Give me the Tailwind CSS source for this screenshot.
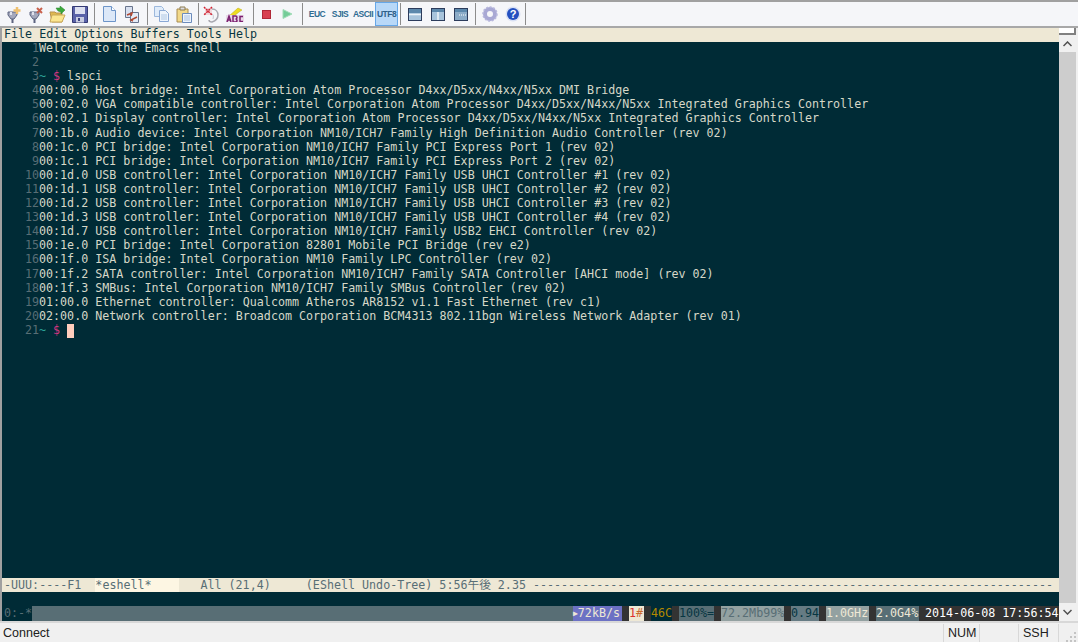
<!doctype html>
<html>

<head>
  <meta charset="UTF-8">
  <script src="https://cdn.jsdelivr.net/npm/@tailwindcss/browser@4"></script>
</head>

<body class="w-[1078px] h-[642px] overflow-hidden flex flex-col bg-[#f0f0f0] font-['DejaVu_Sans_Mono','Noto_Sans_CJK_JP',monospace] text-[11.68px]">

  <!-- toolbar -->
  <div class="h-[28px] shrink-0 flex items-center border-t-2 border-b-2 border-t-[#a0a0a0] border-b-[#a8a8a8] bg-[#f5f6f9]">
    <div class="w-[2px]"></div>
    <div class="w-[22px] flex justify-center"><svg width="17" height="17" viewBox="0 0 17 17"><path d="M3 6h9v3l-3 4H6L3 9z" fill="#a4a8bc" stroke="#5c6480"/><path d="M5 6h2v3H5z" fill="#e0e2ec"/><path d="M7.500 13v4" stroke="#5c6480" stroke-width="2"/><path d="M12 1v7M8.500 4.500h7" stroke="#eec070" stroke-width="2.500"/></svg></div>
    <div class="w-[22px] flex justify-center"><svg width="17" height="17" viewBox="0 0 17 17"><path d="M3 6h9v3l-3 4H6L3 9z" fill="#a4a8bc" stroke="#5c6480"/><path d="M5 6h2v3H5z" fill="#e0e2ec"/><path d="M7.500 13v4" stroke="#5c6480" stroke-width="2"/><path d="M10 2l5 5M15 2l-5 5" stroke="#c8604c" stroke-width="2"/></svg></div>
    <div class="w-[22px] flex justify-center"><svg width="17" height="17" viewBox="0 0 17 17"><path d="M1 6h5l1 1h6v9H3z" fill="#e0b850" stroke="#b8944c"/><path d="M3 9h13l-3 7H1z" fill="#fbe690" stroke="#c8a858"/><path d="M7 2l4 0 0-2 5 4-4 4v-2l-3-1z" fill="#3aa83a" stroke="#2a8030" stroke-width=".5"/></svg></div>
    <div class="w-[23px] flex justify-center"><svg width="16" height="17" viewBox="0 0 16 17"><path d="M.5 .5h15v16H.5z" fill="#5a62a8" stroke="#343a74"/><path d="M3 1h10v7H3z" fill="#dde0f0"/><path d="M4 11h8v5.500H4z" fill="#c8cce0"/><path d="M6 12h2v3H6z" fill="#3a4280"/></svg></div>
    <div class="w-[1px] h-[22px] mx-[3px] bg-[#8c8c8c]"></div>
    <div class="w-[22px] flex justify-center"><svg width="13" height="16" viewBox="0 0 13 16"><path d="M.5 .5h8l4 4v11H.5z" fill="#dce8f8" stroke="#6c94c8"/><path d="M8.500 .5v4h4" fill="#fff" stroke="#6c94c8"/></svg></div>
    <div class="w-[24px] flex justify-center"><svg width="16" height="17" viewBox="0 0 16 17"><path d="M1.500 .5h7v11h-7z" fill="#d8e0f0" stroke="#68748c"/><path d="M6.500 6.500h8v10h-8z" fill="#e4ecf8" stroke="#68748c"/><path d="M3 9l5-2-1 3M13 11l-6 3 2 1" stroke="#b04830" stroke-width="1.500" fill="none"/></svg></div>
    <div class="w-[1px] h-[22px] mx-[3px] bg-[#8c8c8c]"></div>
    <div class="w-[21px] flex justify-center"><svg width="15" height="16" viewBox="0 0 15 16"><path d="M.5 .5h7l2 2v8h-9z" fill="#e0ecfa" stroke="#9cb8dc"/><path d="M5.500 4.500h6l3 3v8h-9z" fill="#eef4fc" stroke="#8aa8d4"/><path d="M7 9h6M7 11h6M7 13h6" stroke="#b0c8e4"/></svg></div>
    <div class="w-[23px] flex justify-center"><svg width="16" height="17" viewBox="0 0 16 17"><path d="M1 3h11v13H1z" fill="#f2d98a" stroke="#a88c50" rx="1"/><path d="M4 1h5v3H4z" fill="#dcdce4" stroke="#8c7c50"/><path d="M6.500 7.500h9v9h-9z" fill="#eef4fc" stroke="#6c8cbc"/><path d="M8 10h6M8 12h6M8 14h6" stroke="#a8c0e0"/></svg></div>
    <div class="w-[1px] h-[22px] mx-[3px] bg-[#8c8c8c]"></div>
    <div class="w-[18px] flex justify-center"><svg width="16" height="17" viewBox="0 0 16 17"><path d="M9 3c4 0 6 3 6 6 0 4-3 6-6 7-2 0-3-1-3-2" fill="none" stroke="#a8a8b0" stroke-width="1.500"/><path d="M8 7c2 1 3 3 2 6" fill="none" stroke="#c8c8d0"/><rect x="2" y="2" width="7" height="7" fill="#f0d8dc"/><path d="M1 1l8 8M9 1l-8 8" stroke="#d02030" stroke-width="1.500" stroke-dasharray="2 1"/></svg></div>
    <div class="w-[30px] flex justify-center"><svg width="18" height="15" viewBox="0 0 18 15"><path d="M3 9L12 1l4 2-3 2-5 4z" fill="#eedc20" stroke="#b8a818" stroke-width=".5"/><rect x="0" y="8" width="18" height="7" fill="#e8d8e8"/><path d="M1 15l2-6 2 6M2 13h2M7 9v6h2.500c2 0 2-3 0-3 2 0 2-3 0-3zM17 9.500h-3v5h3" fill="none" stroke="#7c2070" stroke-width="1.500"/></svg></div>
    <div class="w-[1px] h-[22px] mx-[3px] bg-[#8c8c8c]"></div>
    <div class="w-[18px] flex justify-center"><div class="w-[9px] h-[9px] bg-[#d84050] border border-[#b02838]"></div></div>
    <div class="w-[24px] flex justify-center"><svg width="11" height="10" viewBox="0 0 11 10"><path d="M1 .5l9 4.500-9 4.500z" fill="#74cc98" stroke="#a0dcb8"/></svg></div>
    <div class="w-[1px] h-[22px] mx-[3px] bg-[#8c8c8c]"></div>
    <div class="w-[22px] text-center font-['Liberation_Sans'] font-bold text-[8.500px] tracking-[-.5px] text-[#2f6c92]">EUC</div>
    <div class="w-[24px] text-center font-['Liberation_Sans'] font-bold text-[8.500px] tracking-[-.5px] text-[#2f6c92]">SJIS</div>
    <div class="w-[22px] text-center font-['Liberation_Sans'] font-bold text-[8.500px] tracking-[-.5px] text-[#2f6c92]">ASCII</div>
    <div class="w-[23px] h-[24px] ml-[1px] flex items-center justify-center border border-[#66a7e8] bg-[#b8d8f8] font-['Liberation_Sans'] font-bold text-[8.500px] tracking-[-.5px] text-[#2f6088]">UTF8</div>
    <div class="w-[1px] h-[22px] ml-[2px] mr-[3px] bg-[#8c8c8c]"></div>
    <div class="w-[22px] flex justify-center"><svg width="14" height="13" viewBox="0 0 14 13"><rect x=".5" y=".5" width="13" height="12" fill="#a8c4dc" stroke="#2c3c5c"/><path d="M1 1h12v4H1z" fill="#5c88ac"/><path d="M1 6.500h12" stroke="#eef4fa" stroke-width="1.500"/></svg></div>
    <div class="w-[23px] flex justify-center"><svg width="14" height="13" viewBox="0 0 14 13"><rect x=".5" y=".5" width="13" height="12" fill="#a8c4dc" stroke="#2c3c5c"/><path d="M1 1h12v3H1z" fill="#5c88ac"/><path d="M7 4v8" stroke="#eef4fa" stroke-width="1.500"/></svg></div>
    <div class="w-[23px] flex justify-center"><svg width="14" height="13" viewBox="0 0 14 13"><rect x=".5" y=".5" width="13" height="12" fill="#8cacc8" stroke="#2c3c5c"/><path d="M1 1h12v3H1z" fill="#5c88ac"/><path d="M5 7h1M7 7h1M9 7h1M11 7h1" stroke="#fff"/></svg></div>
    <div class="w-[1px] h-[22px] mx-[3px] bg-[#8c8c8c]"></div>
    <div class="w-[22px] flex justify-center"><svg width="16" height="16" viewBox="0 0 16 16"><circle cx="8" cy="8" r="5" fill="none" stroke="#a8a8d4" stroke-width="4"/><circle cx="8" cy="8" r="7" fill="none" stroke="#b8b8dc" stroke-width="1.500" stroke-dasharray="2 1.600"/></svg></div>
    <div class="w-[24px] flex justify-center"><svg width="16" height="16" viewBox="0 0 16 16"><circle cx="8" cy="8" r="7.500" fill="#d8e0f4"/><circle cx="8" cy="8" r="6" fill="#2450c0"/><text x="8" y="12" text-anchor="middle" font-family="Liberation Sans" font-weight="700" font-size="11" fill="#fff">?</text></svg></div>
    <div class="w-[1px] h-[22px] bg-[#8c8c8c]"></div>
  </div>

  <!-- emacs frame -->
  <div class="h-[593px] shrink-0 flex border-l-2 border-[#a0a0a0]">
    <div class="w-[1057px] flex flex-col">
      <!-- menu bar -->
      <div class="h-[14px] pl-[2px] flex items-center bg-[#eee8d5] text-[#073642] whitespace-pre">File Edit Options Buffers Tools Help</div>

      <!-- buffer -->
      <div class="flex-1 bg-[#002b36] text-[#d6d8c8] whitespace-pre grid grid-cols-[37px_1fr] auto-rows-[14.1px] content-start leading-[13.1px]">
        <span class="text-right text-[#586e75]">1</span><span>Welcome to the Emacs shell</span>
        <span class="text-right text-[#586e75]">2</span><span></span>
        <span class="text-right text-[#586e75]">3</span><span><span class="text-[#2aa198]">~</span> <span class="text-[#d33682]">$</span> lspci</span>
        <span class="text-right text-[#586e75]">4</span><span>00:00.0 Host bridge: Intel Corporation Atom Processor D4xx/D5xx/N4xx/N5xx DMI Bridge</span>
        <span class="text-right text-[#586e75]">5</span><span>00:02.0 VGA compatible controller: Intel Corporation Atom Processor D4xx/D5xx/N4xx/N5xx Integrated Graphics Controller</span>
        <span class="text-right text-[#586e75]">6</span><span>00:02.1 Display controller: Intel Corporation Atom Processor D4xx/D5xx/N4xx/N5xx Integrated Graphics Controller</span>
        <span class="text-right text-[#586e75]">7</span><span>00:1b.0 Audio device: Intel Corporation NM10/ICH7 Family High Definition Audio Controller (rev 02)</span>
        <span class="text-right text-[#586e75]">8</span><span>00:1c.0 PCI bridge: Intel Corporation NM10/ICH7 Family PCI Express Port 1 (rev 02)</span>
        <span class="text-right text-[#586e75]">9</span><span>00:1c.1 PCI bridge: Intel Corporation NM10/ICH7 Family PCI Express Port 2 (rev 02)</span>
        <span class="text-right text-[#586e75]">10</span><span>00:1d.0 USB controller: Intel Corporation NM10/ICH7 Family USB UHCI Controller #1 (rev 02)</span>
        <span class="text-right text-[#586e75]">11</span><span>00:1d.1 USB controller: Intel Corporation NM10/ICH7 Family USB UHCI Controller #2 (rev 02)</span>
        <span class="text-right text-[#586e75]">12</span><span>00:1d.2 USB controller: Intel Corporation NM10/ICH7 Family USB UHCI Controller #3 (rev 02)</span>
        <span class="text-right text-[#586e75]">13</span><span>00:1d.3 USB controller: Intel Corporation NM10/ICH7 Family USB UHCI Controller #4 (rev 02)</span>
        <span class="text-right text-[#586e75]">14</span><span>00:1d.7 USB controller: Intel Corporation NM10/ICH7 Family USB2 EHCI Controller (rev 02)</span>
        <span class="text-right text-[#586e75]">15</span><span>00:1e.0 PCI bridge: Intel Corporation 82801 Mobile PCI Bridge (rev e2)</span>
        <span class="text-right text-[#586e75]">16</span><span>00:1f.0 ISA bridge: Intel Corporation NM10 Family LPC Controller (rev 02)</span>
        <span class="text-right text-[#586e75]">17</span><span>00:1f.2 SATA controller: Intel Corporation NM10/ICH7 Family SATA Controller [AHCI mode] (rev 02)</span>
        <span class="text-right text-[#586e75]">18</span><span>00:1f.3 SMBus: Intel Corporation NM10/ICH7 Family SMBus Controller (rev 02)</span>
        <span class="text-right text-[#586e75]">19</span><span>01:00.0 Ethernet controller: Qualcomm Atheros AR8152 v1.1 Fast Ethernet (rev c1)</span>
        <span class="text-right text-[#586e75]">20</span><span>02:00.0 Network controller: Broadcom Corporation BCM4313 802.11bgn Wireless Network Adapter (rev 01)</span>
        <span class="text-right text-[#586e75]">21</span><span><span class="text-[#2aa198]">~</span> <span class="text-[#d33682]">$</span> <span class="inline-block w-[7px] h-[14px] align-top bg-[#ffcdbd]"></span></span>
      </div>

      <!-- mode line -->
      <div class="h-[14px] bg-[#eee8d5] text-[#586e75] whitespace-pre leading-[14px] pl-[2px] flex"><span class="shrink-0">-UUU:----F1  </span><span class="w-[84px] shrink-0 bg-[#fdf6e3]">*eshell*</span><span class="shrink-0">   All (21,4)     (EShell Undo-Tree) 5:56午後 2.35 --------------------------------------------------------------------------</span></div>
      <div class="h-[14px] bg-[#002b36]"></div>

      <!-- status line -->
      <div class="h-[15px] flex bg-[#586e75] whitespace-pre leading-[15px]">
        <span class="w-[30px] pl-[2px] bg-[#002b36] text-[#586e75]">0:-*</span>
        <span class="flex-1"></span>
        <span class="w-[49px] bg-[#6c71c4] text-[#eee8d5]"><span class="text-[8px] align-[1px]">▶</span>72kB/s</span>
        <span class="w-[7px] bg-[#333333]"></span>
        <span class="w-[15px] bg-[#eee8d5] text-[#dc322f]">1<span class="text-[#cb6b2f]">#</span></span>
        <span class="w-[7px] bg-[#333333]"></span>
        <span class="w-[21px] bg-[#002b36] text-[#b58900]">46C</span>
        <span class="w-[7px] bg-[#333333]"></span>
        <span class="w-[35px] bg-[#586e75] text-[#073642]">100%=</span>
        <span class="w-[7px] bg-[#333333]"></span>
        <span class="w-[63px] bg-[#93a1a1] text-[#586e75]">72.2Mb99%</span>
        <span class="w-[7px] bg-[#333333]"></span>
        <span class="w-[28px] bg-[#657b83] text-[#073642]">0.94</span>
        <span class="w-[7px] bg-[#333333]"></span>
        <span class="w-[43px] bg-[#93a1a1] text-[#eee8d5]">1.0GHz</span>
        <span class="w-[7px] bg-[#333333]"></span>
        <span class="w-[43px] bg-[#586e75] text-[#eee8d5]">2.0G4%</span>
        <span class="w-[140px] pl-[6px] bg-[#333333] text-white">2014-06-08 17:56:54</span>
      </div>
    </div>

    <!-- scroll bar -->
    <div class="w-[19px] flex flex-col bg-[#f0f0f0]">
      <div class="w-[17px] h-[7px] bg-white border-2 border-t-0 border-l-0 border-[#808080]"></div>
      <div class="w-[17px] h-[17px] flex items-center justify-center"><svg width="9" height="6" viewBox="0 0 9 6"><path d="M.5 5L4.500 1l4 4" fill="none" stroke="#505050" stroke-width="1.500"/></svg></div>
      <div class="w-[17px] flex-1 bg-[#cdcdcd]"></div>
      <div class="w-[17px] h-[18px] flex items-center justify-center"><svg width="9" height="6" viewBox="0 0 9 6"><path d="M.5 1l4 4 4-4" fill="none" stroke="#505050" stroke-width="1.500"/></svg></div>
    </div>
  </div>

  <!-- windows status bar -->
  <div class="flex-1 flex items-end border-t-2 border-[#d8d8d8] font-['Liberation_Sans'] text-[12.500px] leading-[18px] text-[#202020]">
    <div class="w-[943px] pl-[3px]">Connect</div>
    <div class="w-[36px] pl-[4px] border-l border-[#d8d8d8]">NUM</div>
    <div class="w-[39px] border-l border-[#d8d8d8] h-[18px]"></div>
    <div class="w-[40px] pl-[4px] border-l border-[#d8d8d8]">SSH</div>
    <div class="flex-1 h-[18px] border-l border-[#d8d8d8] flex items-end justify-end pr-[1px]"><svg width="11" height="11" viewBox="0 0 11 11"><path d="M8 1h2v2H8zM4 5h2v2H4zM8 5h2v2H8zM0 9h2v2H0zM4 9h2v2H4zM8 9h2v2H8z" fill="#c4c4c4"/></svg></div>
  </div>
</body>

</html>
